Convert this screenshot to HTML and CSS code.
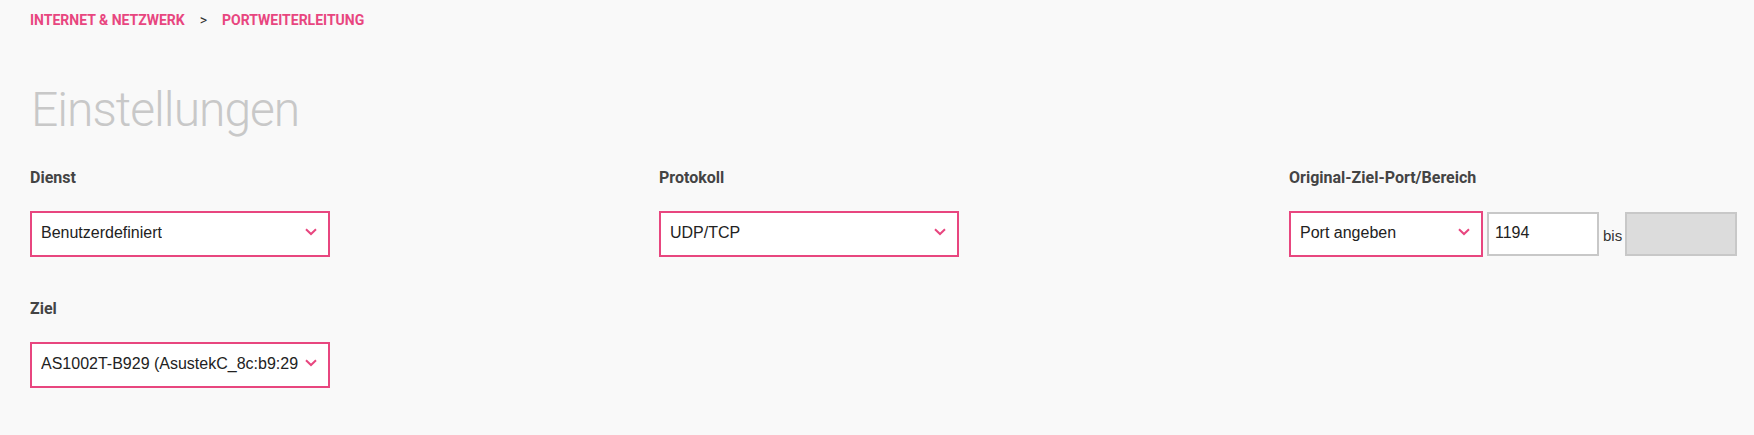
FILE: index.html
```html
<!DOCTYPE html>
<html lang="de">
<head>
<meta charset="utf-8">
<title>Portweiterleitung</title>
<link rel="stylesheet" href="styles.css">
</head>
<body>
<div class="page">
  <nav class="crumbs">
    <a class="crumb">INTERNET &amp; NETZWERK</a>
    <span class="sep">&gt;</span>
    <a class="crumb">PORTWEITERLEITUNG</a>
  </nav>
  <h1 class="title">Einstellungen</h1>
  <div class="grid">
    <div class="field">
      <div class="label">Dienst</div>
      <div class="select w300"><span class="val">Benutzerdefiniert</span><svg class="chev" width="12" height="8" viewBox="0 0 12 8"><path d="M1 1.2 L6 6 L11 1.2" fill="none" stroke="#e8467f" stroke-width="2"/></svg></div>
    </div>
    <div class="field">
      <div class="label">Protokoll</div>
      <div class="select w300"><span class="val">UDP/TCP</span><svg class="chev" width="12" height="8" viewBox="0 0 12 8"><path d="M1 1.2 L6 6 L11 1.2" fill="none" stroke="#e8467f" stroke-width="2"/></svg></div>
    </div>
    <div class="field">
      <div class="label">Original-Ziel-Port/Bereich</div>
      <div class="row">
        <div class="select w194"><span class="val">Port angeben</span><svg class="chev" width="12" height="8" viewBox="0 0 12 8"><path d="M1 1.2 L6 6 L11 1.2" fill="none" stroke="#e8467f" stroke-width="2"/></svg></div>
        <div class="input">1194</div>
        <span class="bis">bis</span>
        <div class="input disabled"></div>
      </div>
    </div>
    <div class="field ziel">
      <div class="label">Ziel</div>
      <div class="select w300"><span class="val">AS1002T-B929 (AsustekC_8c:b9:29</span><svg class="chev" width="12" height="8" viewBox="0 0 12 8"><path d="M1 1.2 L6 6 L11 1.2" fill="none" stroke="#e8467f" stroke-width="2"/></svg></div>
    </div>
  </div>
</div>
</body>
</html>
```

FILE: styles.css
```css
html, body {
  margin: 0;
  padding: 0;
  background: #f9f9f9;
}
.page {
  padding: 10px 0 0 30px;
  font-family: Roboto, "Liberation Sans", sans-serif;
}
.crumbs {
  display: flex;
  align-items: center;
  height: 20px;
  font-size: 14px;
  font-weight: 700;
}
.crumb {
  color: #e8467f;
}
.sep {
  color: #333;
  font-weight: 400;
  margin: 0 15px 0 15px;
}
.title {
  margin: 52px 0 0 1px;
  font-size: 48px;
  letter-spacing: -1px;
  font-weight: 300;
  color: #c8c8c8;
  line-height: 56px;
  height: 56px;
}
.grid {
  display: grid;
  grid-template-columns: 629px 630px 1fr;
  row-gap: 43px;
  margin-top: 31px;
}
.ziel {
  grid-column: 1;
}
.label {
  font-size: 16px;
  font-weight: 700;
  color: #444;
  line-height: 18px;
  height: 18px;
}
.select {
  margin-top: 24px;
  box-sizing: border-box;
  height: 46px;
  border: 2px solid #e8467f;
  background: #fff;
  display: flex;
  align-items: center;
  justify-content: space-between;
  padding: 0 11px 2px 9px;
  font-family: "Liberation Sans", Arial, sans-serif;
  font-size: 16px;
  color: #222;
  overflow: hidden;
  white-space: nowrap;
}
.select .val {
  overflow: hidden;
}
.chev {
  flex: none;
  margin-left: 4px;
  margin-top: -3px;
}
.w300 { width: 300px; }
.w194 { width: 194px; }
.row {
  display: flex;
  align-items: flex-end;
}
.row .select {
  flex: none;
}
.input {
  box-sizing: border-box;
  width: 112px;
  height: 44px;
  margin-left: 4px;
  border: 2px solid #c8c8c8;
  background: #fff;
  font-family: "Liberation Sans", Arial, sans-serif;
  font-size: 16px;
  color: #222;
  display: flex;
  align-items: center;
  padding: 0 0 2px 6px;
  margin-bottom: 1px;
}
.input.disabled {
  background: #dcdcdc;
  margin-left: 3px;
}
.bis {
  font-family: "Liberation Sans", Arial, sans-serif;
  font-size: 15px;
  color: #333;
  margin-left: 4px;
  margin-bottom: 13px;
}
```
